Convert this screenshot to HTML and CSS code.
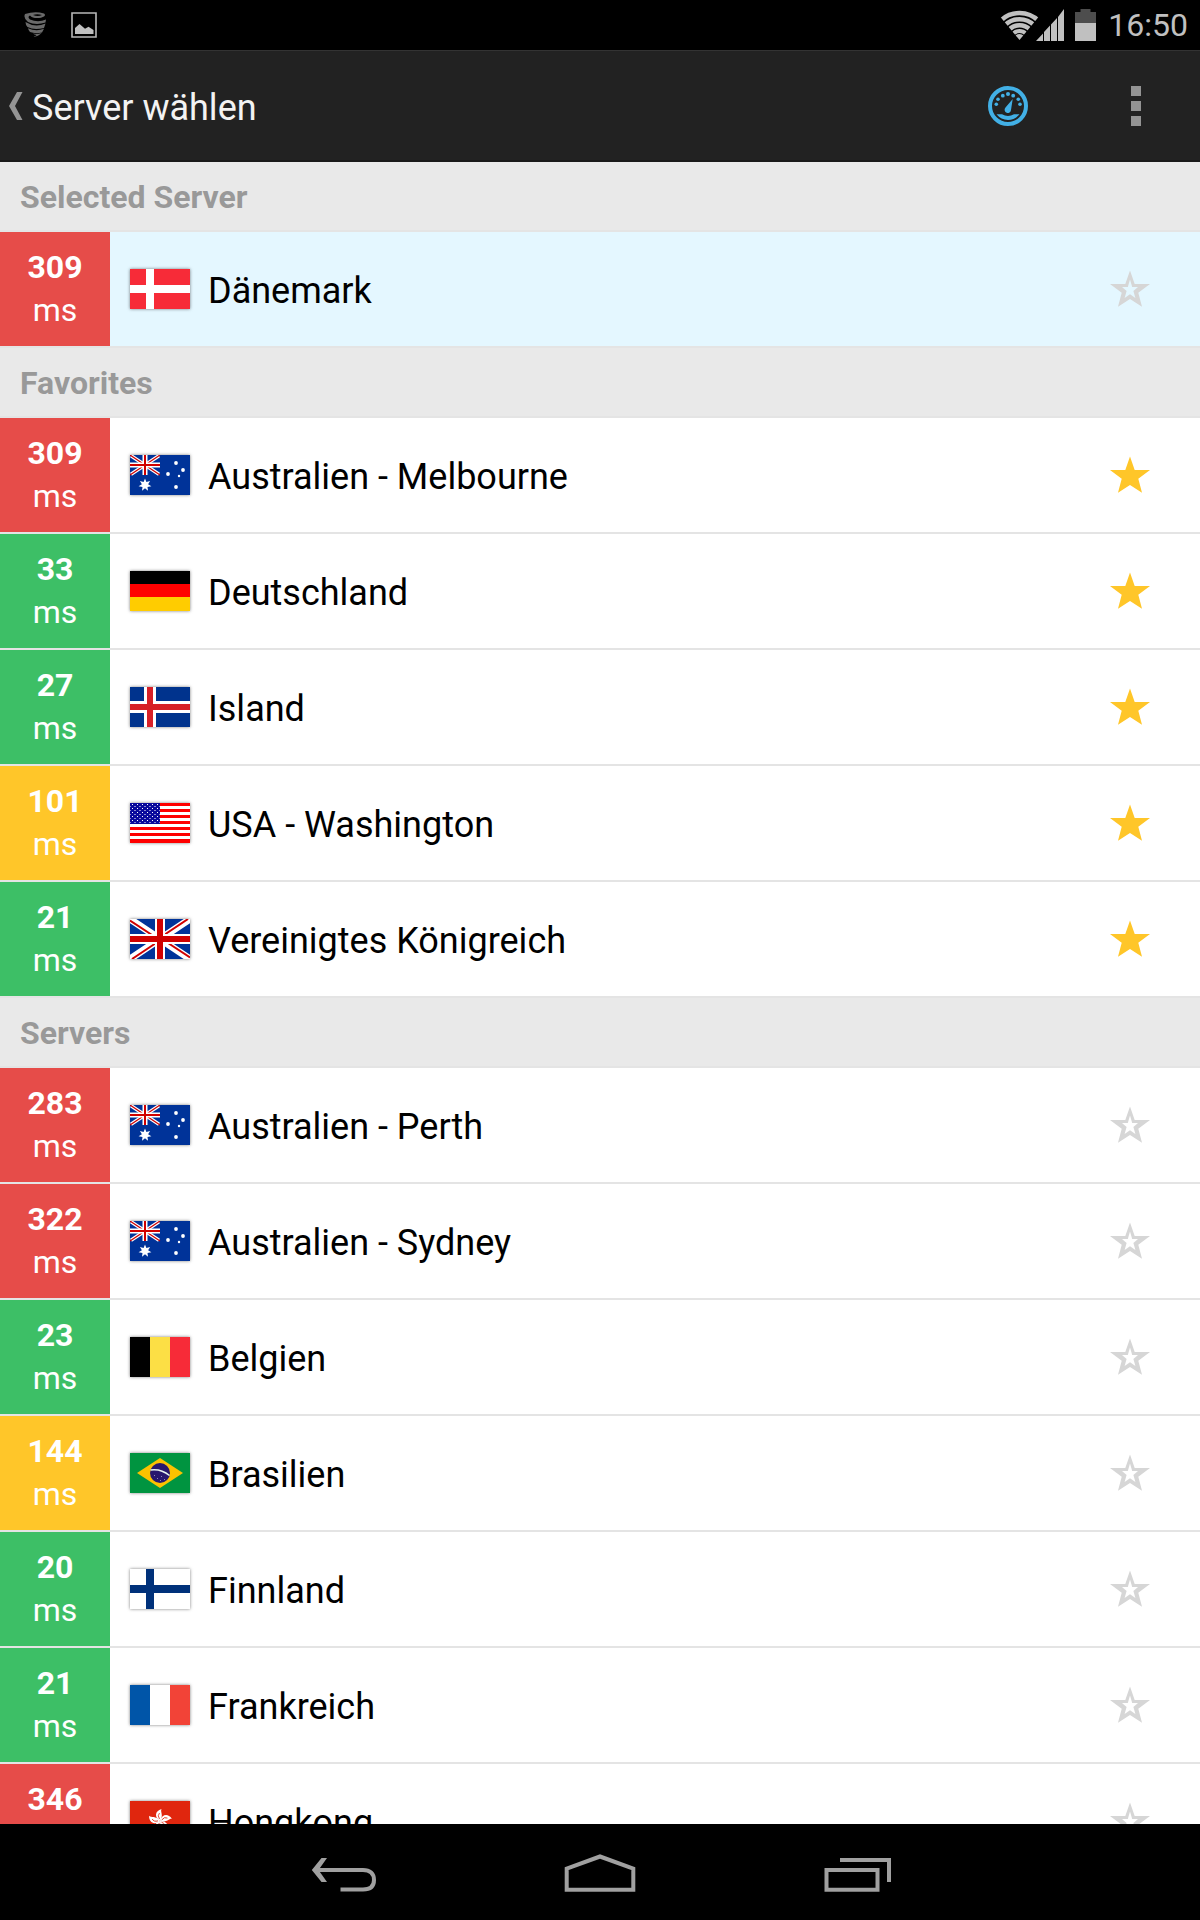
FILE: index.html
```html
<!DOCTYPE html>
<html lang="de">
<head>
<meta charset="utf-8">
<meta name="viewport" content="width=device-width, initial-scale=1">
<title>Server wählen</title>
<link rel="stylesheet" href="styles.css">
</head>
<body>
<svg class="defs" aria-hidden="true">
  <symbol id="star-off" viewBox="0 0 40 40"><path fill="#d6d6d6" fill-rule="evenodd" d="M20 .5L24.7 14H40L28.3 22.7 32 36.7 20 29 8 36.7 11.7 22.7 0 14H15.3ZM20 9.5L17.8 17H12L16.6 21 14.6 28 20 24.2 25.4 28 23.4 21 28 17H22.2Z"/></symbol>
  <symbol id="star-on" viewBox="0 0 40 40"><path fill="#ffc629" d="M20 .5L24.7 14H40L28.3 22.7 32 36.7 20 29 8 36.7 11.7 22.7 0 14H15.3Z"/></symbol>

  <symbol id="flag-dk" viewBox="0 0 60 40"><path fill="#f72b38" d="M0 0h60v40H0z"/><path fill="#fff" d="M16 0h8v40h-8zM0 16h60v8H0z"/></symbol>
  <symbol id="flag-gb" viewBox="0 0 60 40">
    <path fill="#003399" d="M0 0h60v40H0z"/>
    <path stroke="#fff" stroke-width="7" d="M0 0L60 40M60 0L0 40"/>
    <path stroke="#d00000" stroke-width="2" d="M0 1.5L25 18M60 38.500L35 22M58 0L34 16M2 40L26 24"/>
    <path fill="#fff" d="M25 0h10v40H25zM0 15h60v10H0z"/>
    <path fill="#d00000" d="M27 0h6v40h-6zM0 17h60v6H0z"/>
  </symbol>
  <symbol id="flag-au" viewBox="0 0 60 40">
    <path fill="#003399" d="M0 0h60v40H0z"/>
    <path stroke="#fff" stroke-width="3.500" d="M1 .7L29 19.300M29 .7L1 19.300"/>
    <path stroke="#d00000" stroke-width="1.200" d="M0 0L30 20M30 0L0 20"/>
    <path fill="#fff" d="M12.500 0h5v20h-5zM0 7.500h30v5H0z"/>
    <path fill="#d00000" d="M14 0h2v20h-2zM0 9h30v2H0z"/>
    <g fill="#fff">
      <path d="M15 23.500l1.400 3.600 3.700-1.200-2 3.400 3.300 2-3.900.6.500 3.900-3-2.600-3 2.600.5-3.900-3.900-.6 3.300-2-2-3.400 3.700 1.200z"/>
      <circle cx="46" cy="8" r="1.900"/><circle cx="53" cy="15" r="1.900"/><circle cx="38" cy="19" r="1.900"/><circle cx="49" cy="21" r="1.200"/><circle cx="46" cy="32" r="1.900"/>
    </g>
  </symbol>
  <symbol id="flag-de" viewBox="0 0 60 40"><path d="M0 0h60v13H0z"/><path fill="#f00" d="M0 13h60v13H0z"/><path fill="#ffcc00" d="M0 26h60v14H0z"/></symbol>
  <symbol id="flag-is" viewBox="0 0 60 40"><path fill="#00338d" d="M0 0h60v40H0z"/><path fill="#fff" d="M14 0h12v40H14zM0 14h60v12H0z"/><path fill="#d72027" d="M17 0h6v40h-6zM0 17h60v6H0z"/></symbol>
  <symbol id="flag-us" viewBox="0 0 60 40">
    <defs><pattern id="us-stars" width="5" height="4" patternUnits="userSpaceOnUse"><path fill="#fff" d="M2 1h1v1H2zM4.500 3h.5v1h-.5zM0 3h.5v1H0z"/></pattern></defs>
    <path fill="#fff" d="M0 0h60v40H0z"/>
    <path fill="#f00" d="M0 0h60v3H0zM0 6h60v3H0zM0 12h60v3H0zM0 18h60v3H0zM0 24h60v3H0zM0 30h60v3H0zM0 36h60v4H0z"/>
    <path fill="#0a0a9c" d="M0 0h30v21H0z"/><path fill="url(#us-stars)" d="M0 0h30v20H0z"/>
  </symbol>
  <symbol id="flag-be" viewBox="0 0 60 40"><path d="M0 0h20v40H0z"/><path fill="#fcdf45" d="M20 0h20v40H20z"/><path fill="#f72b38" d="M40 0h20v40H40z"/></symbol>
  <symbol id="flag-br" viewBox="0 0 60 40"><path fill="#009440" d="M0 0h60v40H0z"/><path fill="#fbc200" d="M7 20L30 5l23 15-23 15z"/><circle cx="30" cy="20" r="10" fill="#28176e"/><path fill="none" stroke="#e8f4f0" stroke-width="1.500" d="M20.500 17Q31 15.500 39.500 22.500"/><path fill="#8f86bb" d="M24 22h1v1h-1zM27 25h1v1h-1zM31 23h1v1h-1zM34 26h1v1h-1zM30 27h1v1h-1z"/></symbol>
  <symbol id="flag-fi" viewBox="0 0 60 40"><path fill="#fff" d="M0 0h60v40H0z"/><path fill="#00317a" d="M16 0h8v40h-8zM0 16h60v8H0z"/></symbol>
  <symbol id="flag-fr" viewBox="0 0 60 40"><path fill="#0055a8" d="M0 0h20v40H0z"/><path fill="#fff" d="M20 0h20v40H20z"/><path fill="#f24337" d="M40 0h20v40H40z"/></symbol>
  <symbol id="flag-hk" viewBox="0 0 60 40">
    <defs><g id="petal"><path fill="#fff" d="M30 20C24 16 25 10 31.500 8C30 11 34 14 30 20Z"/><path fill="none" stroke="#e0260e" stroke-width=".8" d="M29.500 18Q27 14.500 29.500 12"/></g></defs>
    <path fill="#e0260e" d="M0 0h60v40H0z"/>
    <use href="#petal"/><use href="#petal" transform="rotate(72 30 20)"/><use href="#petal" transform="rotate(144 30 20)"/><use href="#petal" transform="rotate(216 30 20)"/><use href="#petal" transform="rotate(288 30 20)"/>
  </symbol>
</svg>

<div class="screen">
  <div class="status-bar">
    <div class="status-group notifications">
      <svg width="24" height="26" viewBox="0 0 24 26" aria-label="VPN" fill="#6a6a6a">
        <path fill-rule="evenodd" d="M1 2Q11-1 20 1.500Q23 4 17 5.800Q9 7 6 3.500Q3 5 6 7.500Q14 11 22 7.500L21.500 10.500Q12 13.500 4 10Q-1 6 1 2ZM9 3Q14 5 18 3Q13 1.500 9 3Z"/>
        <path d="M1.500 10Q11 16 21.500 11.500L20 16Q10 18.500 3.500 15Q1.500 13 1.500 10Z"/>
        <path d="M4 16.200Q12 20 20 16.800L18 20.500Q11 22 6 20Q4.500 18.500 4 16.200Z"/>
        <path d="M9 21.500Q13 22.500 17.500 21Q14.500 24.500 9 25Q12 24 12.500 23Q10 22.800 9 21.500Z"/>
      </svg>
      <svg width="26" height="26" viewBox="0 0 26 26" aria-label="Screenshot"><path fill="none" stroke="#b8b8b8" stroke-width="1.600" d="M1 1h24v24H1z"/><path fill="#c0c0c0" d="M4 22v-6l4.500-4 5.500 4.800 3.500-2 5 3.200v4z"/></svg>
    </div>
    <div class="status-group">
      <svg width="64" height="32" viewBox="0 0 64 32" aria-label="WLAN und Mobilfunk" fill="#c0c0c0">
        <defs><clipPath id="fan"><path d="M19.500 31L-2 5V-2H41V5z"/></clipPath></defs>
        <g clip-path="url(#fan)" fill="none" stroke="#c0c0c0" stroke-width="4.500">
          <circle cx="19.500" cy="31" r="27"/><circle cx="19.500" cy="31" r="20.800"/><circle cx="19.500" cy="31" r="14.800"/><circle cx="19.500" cy="31" r="9" stroke-width="4"/><circle cx="19.500" cy="31" r="3" stroke-width="6"/>
        </g>
        <path d="M36 32l7-7.500V32zM44 32v-9l6-6.500V32zM51 32V15.500l6-6.500v23zM58 32V8l6-8v32z"/>
      </svg>
      <svg class="battery" width="21" height="32" viewBox="0 0 21 32" aria-label="Akku"><path fill="#4d4d4d" d="M0 3h5.500V0h10v3H21v11H0z"/><path fill="#c0c0c0" d="M0 14h21v18H0z"/></svg>
      <span class="clock">16:50</span>
    </div>
  </div>

  <header class="action-bar">
    <a class="up" href="#">
      <svg width="14" height="28" viewBox="0 0 14 28" aria-hidden="true"><path fill="#949494" d="M8 0h5.500L6 14l7.500 14H8L0 14z"/></svg>
      <h1 class="title">Server wählen</h1>
    </a>
    <button class="action" type="button" aria-label="Geschwindigkeit testen">
      <svg width="40" height="40" viewBox="-20 -20 40 40" fill="#42b0e6">
        <circle r="18" fill="none" stroke="#42b0e6" stroke-width="4"/>
        <circle cx="-11.700" cy="-1.700" r="1.800"/><circle cx="-10" cy="-6.700" r="1.800"/><circle cx="-5.200" cy="-10.300" r="1.900"/><circle cy="-12" r="2"/><circle cx="5.200" cy="-10.300" r="1.900"/><circle cx="10.300" cy="-6.700" r="1.800"/><circle cx="12" cy="-1.700" r="1.800"/>
        <path d="M4.700-7L3 4A3.200 3.200 0 1 1-2.700 1.800z"/>
        <path d="M-11.500 8.300H-6Q0 11.500 6 8.300H11.500Q7 14 0 14T-11.500 8.300z"/>
      </svg>
    </button>
    <button class="action" type="button" aria-label="Weitere Optionen">
      <svg width="10" height="40" viewBox="0 0 10 40"><path fill="#949494" d="M0 0h10v10H0zM0 15h10v10H0zM0 30h10v10H0z"/></svg>
    </button>
  </header>

  <main class="list">
    <h2 class="section">Selected Server</h2>
    <ul class="rows">
      <li class="row selected"><div class="ping slow"><strong>309</strong><span>ms</span></div><svg class="flag"><use href="#flag-dk"/></svg><span class="name">Dänemark</span><button class="fav" type="button" aria-label="Favorit"><svg><use href="#star-off"/></svg></button></li>
    </ul>
    <h2 class="section">Favorites</h2>
    <ul class="rows">
      <li class="row"><div class="ping slow"><strong>309</strong><span>ms</span></div><svg class="flag"><use href="#flag-au"/></svg><span class="name">Australien - Melbourne</span><button class="fav" type="button" aria-label="Favorit"><svg><use href="#star-on"/></svg></button></li>
      <li class="row"><div class="ping fast"><strong>33</strong><span>ms</span></div><svg class="flag"><use href="#flag-de"/></svg><span class="name">Deutschland</span><button class="fav" type="button" aria-label="Favorit"><svg><use href="#star-on"/></svg></button></li>
      <li class="row"><div class="ping fast"><strong>27</strong><span>ms</span></div><svg class="flag"><use href="#flag-is"/></svg><span class="name">Island</span><button class="fav" type="button" aria-label="Favorit"><svg><use href="#star-on"/></svg></button></li>
      <li class="row"><div class="ping medium"><strong>101</strong><span>ms</span></div><svg class="flag"><use href="#flag-us"/></svg><span class="name">USA - Washington</span><button class="fav" type="button" aria-label="Favorit"><svg><use href="#star-on"/></svg></button></li>
      <li class="row"><div class="ping fast"><strong>21</strong><span>ms</span></div><svg class="flag"><use href="#flag-gb"/></svg><span class="name">Vereinigtes Königreich</span><button class="fav" type="button" aria-label="Favorit"><svg><use href="#star-on"/></svg></button></li>
    </ul>
    <h2 class="section">Servers</h2>
    <ul class="rows">
      <li class="row"><div class="ping slow"><strong>283</strong><span>ms</span></div><svg class="flag"><use href="#flag-au"/></svg><span class="name">Australien - Perth</span><button class="fav" type="button" aria-label="Favorit"><svg><use href="#star-off"/></svg></button></li>
      <li class="row"><div class="ping slow"><strong>322</strong><span>ms</span></div><svg class="flag"><use href="#flag-au"/></svg><span class="name">Australien - Sydney</span><button class="fav" type="button" aria-label="Favorit"><svg><use href="#star-off"/></svg></button></li>
      <li class="row"><div class="ping fast"><strong>23</strong><span>ms</span></div><svg class="flag"><use href="#flag-be"/></svg><span class="name">Belgien</span><button class="fav" type="button" aria-label="Favorit"><svg><use href="#star-off"/></svg></button></li>
      <li class="row"><div class="ping medium"><strong>144</strong><span>ms</span></div><svg class="flag"><use href="#flag-br"/></svg><span class="name">Brasilien</span><button class="fav" type="button" aria-label="Favorit"><svg><use href="#star-off"/></svg></button></li>
      <li class="row"><div class="ping fast"><strong>20</strong><span>ms</span></div><svg class="flag"><use href="#flag-fi"/></svg><span class="name">Finnland</span><button class="fav" type="button" aria-label="Favorit"><svg><use href="#star-off"/></svg></button></li>
      <li class="row"><div class="ping fast"><strong>21</strong><span>ms</span></div><svg class="flag"><use href="#flag-fr"/></svg><span class="name">Frankreich</span><button class="fav" type="button" aria-label="Favorit"><svg><use href="#star-off"/></svg></button></li>
      <li class="row"><div class="ping slow"><strong>346</strong><span>ms</span></div><svg class="flag"><use href="#flag-hk"/></svg><span class="name">Hongkong</span><button class="fav" type="button" aria-label="Favorit"><svg><use href="#star-off"/></svg></button></li>
    </ul>
  </main>

  <nav class="nav-bar">
    <button type="button" aria-label="Zurück"><svg width="80" height="96" viewBox="0 0 80 96"><path fill="none" stroke="#a0a0a0" stroke-width="4" d="M11 46H59C66 46 70 49.500 70 56S66 65.500 59 65.500H36.500"/><path fill="#a0a0a0" d="M17.500 34H23L14.500 46 23 58H17.500L7.800 46z"/></svg></button>
    <button type="button" aria-label="Startseite"><svg width="80" height="96" viewBox="0 0 80 96"><path fill="none" stroke="#a0a0a0" stroke-width="4" d="M6.700 65.700V44.700L40 32.500 73.300 44.700V65.700z"/></svg></button>
    <button type="button" aria-label="Letzte Apps"><svg width="80" height="96" viewBox="0 0 80 96"><path fill="none" stroke="#a0a0a0" stroke-width="4" d="M10.500 46H61.500V65.700H10.500zM24 36H73V58"/></svg></button>
  </nav>
</div>
</body>
</html>
```

FILE: styles.css
```css
* {
  box-sizing: border-box;
}

body {
  margin: 0;
  background: #000;
  color: #000;
  font-family: Roboto, "Liberation Sans", sans-serif;
}

svg {
  display: block;
  flex: none;
}

button {
  padding: 0;
  border: 0;
  background: none;
}

.defs {
  position: absolute;
  width: 0;
  height: 0;
}

.screen {
  display: flex;
  flex-direction: column;
  height: 100vh;
}

/* System status bar */
.status-bar {
  display: flex;
  flex: none;
  align-items: center;
  justify-content: space-between;
  height: 50px;
  padding: 0 12px 0 24px;
}

.status-group {
  display: flex;
  align-items: center;
}

.notifications {
  gap: 23px;
}

.battery {
  margin: 0 12px 0 11px;
}

.clock {
  color: #c0c0c0;
  font-size: 32px;
  line-height: 50px;
}

/* Action bar */
.action-bar {
  display: flex;
  flex: none;
  align-items: stretch;
  height: 112px;
  border-top: 1px solid #333;
  border-bottom: 2px solid #1a1a1a;
  background: #222;
}

.up {
  display: flex;
  flex: 1;
  align-items: center;
  gap: 9px;
  padding-left: 9px;
  color: #f3f3f3;
  text-decoration: none;
}

.title {
  margin: 0;
  padding-top: 4px;
  font-size: 36px;
  font-weight: 400;
}

.action {
  display: flex;
  align-items: center;
  justify-content: center;
  width: 128px;
}

/* Server list */
.list {
  flex: 1;
  min-height: 0;
  overflow-y: auto;
  scrollbar-width: none;
  background: #fff;
}

.section {
  margin: 0;
  padding: 2px 0 0 20px;
  border-bottom: 2px solid #e4e4e4;
  background: #e9e9e9;
  color: #999;
  font-size: 32px;
  font-weight: 700;
  line-height: 66px;
}

.rows {
  margin: 0;
  padding: 0;
  list-style: none;
}

.row {
  display: flex;
  align-items: center;
  border-bottom: 2px solid #e4e4e4;
}

.selected {
  background: #e4f7ff;
}

.ping {
  display: flex;
  flex: none;
  flex-direction: column;
  width: 110px;
  padding: 14px 0;
  color: #fff;
  font-size: 32px;
  line-height: 43px;
  text-align: center;
}

.slow {
  background: #e64c49;
}

.medium {
  background: #ffc629;
}

.fast {
  background: #3dbf66;
}

.flag {
  width: 60px;
  height: 40px;
  margin: 0 18px 0 20px;
  box-shadow: 0 0 3px rgba(0, 0, 0, 0.5);
}

.name {
  flex: 1;
  padding-top: 4px;
  font-size: 36px;
}

.fav {
  margin-right: 50px;
  padding-top: 2px;
}

.fav svg {
  width: 40px;
  height: 40px;
}

/* System navigation bar */
.nav-bar {
  display: flex;
  flex: none;
  justify-content: center;
  background: #000;
}

.nav-bar button {
  display: flex;
  justify-content: center;
  width: 256px;
}
```
